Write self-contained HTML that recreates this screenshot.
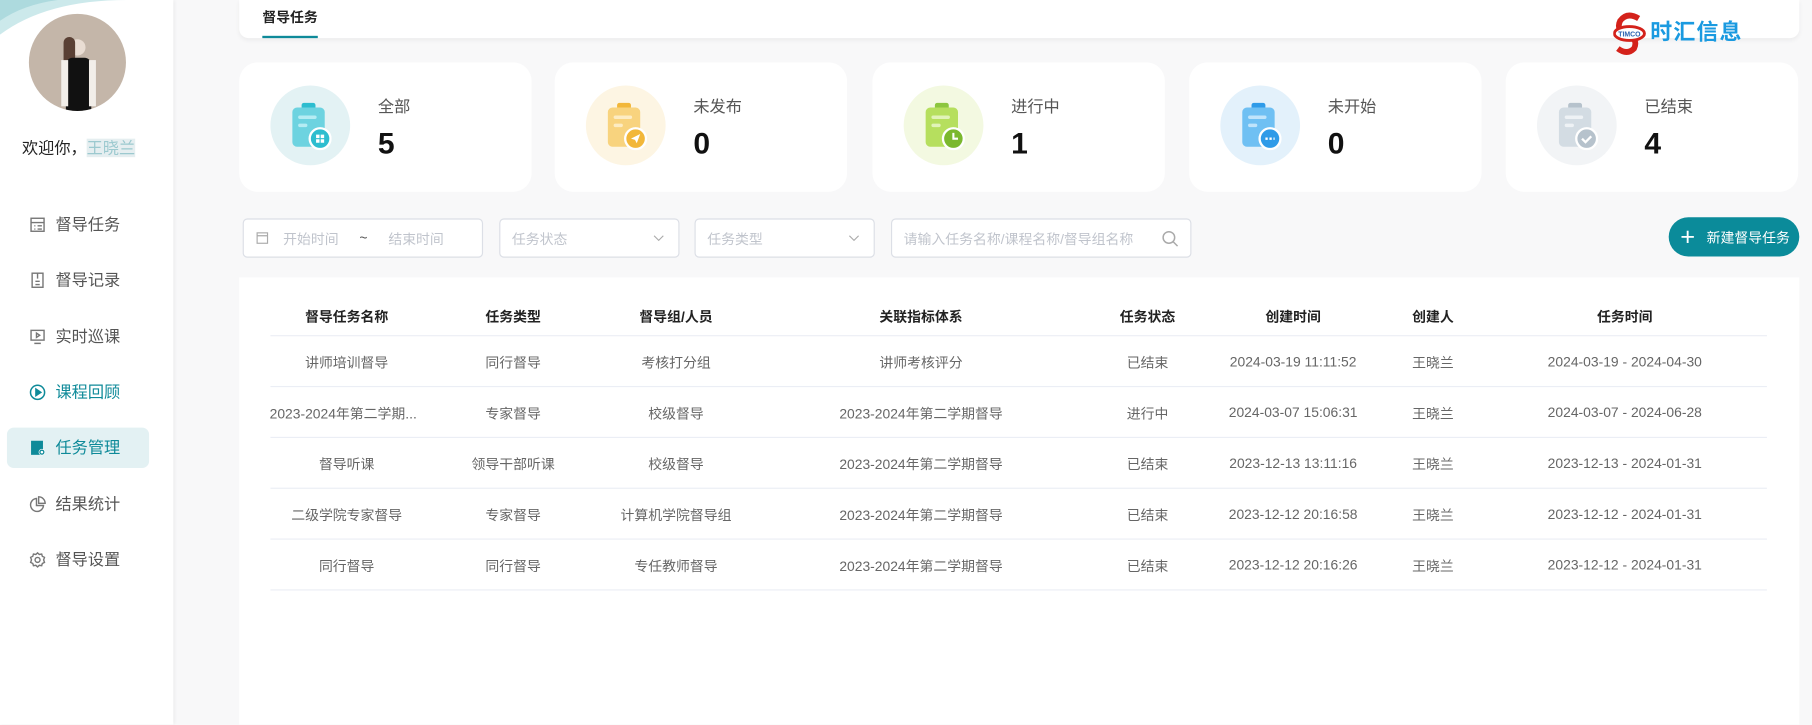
<!DOCTYPE html>
<html><head><meta charset="utf-8"><style>
*{margin:0;padding:0;box-sizing:border-box}
html,body{width:1812px;height:725px;overflow:hidden;background:#f8f8f9}
#w{position:absolute;left:0;top:0;width:1568px;height:627px;transform:scale(1.15561);transform-origin:0 0;font-family:"Liberation Sans","Noto Sans CJK SC",sans-serif;color:#333}
.a{position:absolute}
.side{left:0;top:0;width:150px;height:627px;background:#fff;box-shadow:1px 0 3px rgba(0,0,0,.06)}
.mi{position:absolute;left:25px;font-size:14px;color:#555;display:flex;align-items:center;height:20px}
.mi svg{width:15px;height:15px;margin-right:8px}
.card{background:#fff;border-radius:16px;top:54px;width:253px;height:112px}
.card .ic{position:absolute;left:27px;top:20px;width:69px;height:69px;border-radius:50%}
.card .ic svg{position:absolute;left:17px;top:14px}
.card .lb{position:absolute;left:120px;top:28px;font-size:14px;color:#555}
.card .nm{position:absolute;left:120px;top:55px;font-size:26px;font-weight:bold;color:#111}
.box{position:absolute;top:189px;height:34px;border:1px solid #dcdfe6;border-radius:4px;background:#fff;font-size:12px;color:#c0c4cc;display:flex;align-items:center;padding-left:10px}
.chev{position:absolute;right:12px;top:11px}
.th,.td{position:absolute;font-size:12px;transform:translateX(-50%);white-space:nowrap}
.th{font-weight:bold;color:#222;top:265px}
.td{color:#666}
.ln{position:absolute;left:234px;width:1295px;height:1px;background:#ebeef5}
</style></head><body><div id="w">
<div class="a side"></div>
<svg class="a" style="left:0;top:0" width="110" height="40"><path d="M0 30 Q40 0 110 0 L0 0Z" fill="#bfe3e6" opacity=".8"/><path d="M0 18 Q20 4 50 0 L0 0Z" fill="#9fd3d8" opacity=".7"/></svg>
<div class="a" style="left:25px;top:12px;width:84px;height:84px;border-radius:50%;background:#c4b6a9;overflow:hidden">
<div class="a" style="left:35px;top:22px;width:14px;height:14px;border-radius:50%;background:#e9ddd3"></div>
<div class="a" style="left:30px;top:20px;width:10px;height:40px;background:#5a4034;border-radius:5px"></div>
<div class="a" style="left:32px;top:38px;width:22px;height:50px;background:#111;border-radius:6px 6px 0 0"></div>
<div class="a" style="left:28px;top:40px;width:6px;height:40px;background:#f2eee9"></div>
<div class="a" style="left:52px;top:40px;width:6px;height:40px;background:#f2eee9"></div>
</div>
<div class="a" style="left:19px;top:118px;font-size:14px;color:#222">欢迎你，<span style="color:#9cc9cf;background:#e5eef0">王晓兰</span></div>
<div class="mi" style="top:184px"><svg viewBox="0 0 16 16" fill="none" stroke="#777" stroke-width="1.3"><rect x="2" y="2" width="12" height="12"/><path d="M2 6h12M5 9h1M8 9h4M5 12h1M8 12h4"/></svg>督导任务</div>
<div class="mi" style="top:232px"><svg viewBox="0 0 16 16" fill="none" stroke="#777" stroke-width="1.3"><rect x="3" y="1.5" width="10" height="13"/><path d="M8 1.5v5M6 9h4M6 12h4"/></svg>督导记录</div>
<div class="mi" style="top:281px"><svg viewBox="0 0 16 16" fill="none" stroke="#777" stroke-width="1.3"><rect x="2" y="2" width="12" height="9"/><path d="M7 4.5l3 2-3 2zM5 14h6"/></svg>实时巡课</div>
<div class="mi" style="top:329px;color:#0e8a99"><svg viewBox="0 0 16 16" fill="none" stroke="#0e8a99" stroke-width="1.4"><circle cx="8" cy="8" r="6.5"/><path d="M6.5 5v6l4.5-3z" fill="#0e8a99"/></svg>课程回顾</div>
<div class="a" style="left:6px;top:370px;width:123px;height:35px;background:#e3f1f3;border-radius:6px"></div>
<div class="mi" style="top:377px;color:#0e8a99"><svg viewBox="0 0 16 16"><rect x="2" y="1.5" width="11" height="13" fill="#0e8a99"/><circle cx="12" cy="12" r="3" fill="#fff"/><circle cx="12" cy="12" r="1.8" fill="none" stroke="#0e8a99" stroke-width="1.2"/></svg>任务管理</div>
<div class="mi" style="top:426px"><svg viewBox="0 0 16 16" fill="none" stroke="#777" stroke-width="1.3"><path d="M7 2.5A6 6 0 1 0 13.5 9H7z"/><path d="M9 1v6h6A6 6 0 0 0 9 1z"/></svg>结果统计</div>
<div class="mi" style="top:474px"><svg viewBox="0 0 16 16" fill="none" stroke="#777" stroke-width="1.3"><circle cx="8" cy="8" r="2.3"/><path d="M8 1.5l1.6 1.5 2.2-.4.6 2.1 2 1-.8 2.3.8 2.3-2 1-.6 2.1-2.2-.4L8 14.5 6.4 13l-2.2.4-.6-2.1-2-1 .8-2.3-.8-2.3 2-1 .6-2.1 2.2.4z"/></svg>督导设置</div>

<div class="a" style="left:207px;top:0;width:1350px;height:33px;background:#fff;border-radius:0 0 8px 8px;box-shadow:0 2px 4px rgba(0,0,0,.05)"></div>
<div class="a" style="left:227px;top:6px;font-size:12px;font-weight:bold;color:#222">督导任务</div>
<div class="a" style="left:227px;top:31px;width:48px;height:2px;background:#0e8a99"></div>
<svg class="a" style="left:1396px;top:10px" width="30" height="40"><path d="M22 6 Q12 0 6 8 Q2 16 12 20 Q22 24 18 32 Q12 38 4 32" fill="none" stroke="#d4221b" stroke-width="5"/><ellipse cx="14" cy="19" rx="13" ry="6" fill="#fff" stroke="#d4221b" stroke-width="2.5"/><text x="14" y="21.5" font-size="6" font-weight="bold" text-anchor="middle" fill="#2a62b0" font-family="Liberation Sans">TIMCO</text></svg>
<div class="a" style="left:1428px;top:13px;font-size:19px;font-weight:bold;color:#1a9ae0;letter-spacing:1px">时汇信息</div>

<div class="a card" style="left:207px"><div class="ic" style="background:#e3f2f4"><svg width="36" height="42"><rect x="10" y="1" width="12" height="6" rx="2" fill="#2dbdcf"/><rect x="2" y="5" width="28" height="34" rx="4" fill="#6dd3e0"/><rect x="7" y="12" width="16" height="3" rx="1.5" fill="#b5ecf3"/><rect x="7" y="19" width="8" height="3" rx="1.5" fill="#b5ecf3"/><circle cx="26" cy="32" r="9" fill="#2dbdcf" stroke="#fff" stroke-width="2"/><path d="M22.5 28.5h3v3h-3zM26.5 28.5h3v3h-3zM22.5 32.5h3v3h-3zM26.5 32.5h3v3h-3z" fill="#fff"/></svg></div><div class="lb">全部</div><div class="nm">5</div></div>
<div class="a card" style="left:480px"><div class="ic" style="background:#fdf5e3"><svg width="36" height="42"><rect x="10" y="1" width="12" height="6" rx="2" fill="#f2b73a"/><rect x="2" y="5" width="28" height="34" rx="4" fill="#f8d37e"/><rect x="7" y="12" width="16" height="3" rx="1.5" fill="#fdecc3"/><rect x="7" y="19" width="8" height="3" rx="1.5" fill="#fdecc3"/><circle cx="26" cy="32" r="9" fill="#f2b73a" stroke="#fff" stroke-width="2"/><path d="M22 32l8-4-3 8-1.5-3z" fill="#fff"/></svg></div><div class="lb">未发布</div><div class="nm">0</div></div>
<div class="a card" style="left:755px"><div class="ic" style="background:#f3f9e1"><svg width="36" height="42"><rect x="10" y="1" width="12" height="6" rx="2" fill="#8cc63f"/><rect x="2" y="5" width="28" height="34" rx="4" fill="#b6df5e"/><rect x="7" y="12" width="16" height="3" rx="1.5" fill="#e1f3b8"/><rect x="7" y="19" width="8" height="3" rx="1.5" fill="#e1f3b8"/><circle cx="26" cy="32" r="9" fill="#7bb82e" stroke="#fff" stroke-width="2"/><path d="M26 27v5h4" stroke="#fff" stroke-width="1.8" fill="none"/></svg></div><div class="lb">进行中</div><div class="nm">1</div></div>
<div class="a card" style="left:1029px"><div class="ic" style="background:#e3f1fb"><svg width="36" height="42"><rect x="10" y="1" width="12" height="6" rx="2" fill="#2f9be8"/><rect x="2" y="5" width="28" height="34" rx="4" fill="#6fc0f3"/><rect x="7" y="12" width="16" height="3" rx="1.5" fill="#c0e4fb"/><rect x="7" y="19" width="8" height="3" rx="1.5" fill="#c0e4fb"/><circle cx="26" cy="32" r="9" fill="#2f9be8" stroke="#fff" stroke-width="2"/><path d="M22 32h8" stroke="#fff" stroke-width="2" stroke-dasharray="2 1.5"/></svg></div><div class="lb">未开始</div><div class="nm">0</div></div>
<div class="a card" style="left:1303px"><div class="ic" style="background:#f2f4f6"><svg width="36" height="42"><rect x="10" y="1" width="12" height="6" rx="2" fill="#b6c2cc"/><rect x="2" y="5" width="28" height="34" rx="4" fill="#d3dce3"/><rect x="7" y="12" width="16" height="3" rx="1.5" fill="#eef2f5"/><rect x="7" y="19" width="8" height="3" rx="1.5" fill="#eef2f5"/><circle cx="26" cy="32" r="9" fill="#b6c2cc" stroke="#fff" stroke-width="2"/><path d="M22 32l3 3 5-5" stroke="#fff" stroke-width="2" fill="none"/></svg></div><div class="lb">已结束</div><div class="nm">4</div></div>

<div class="box" style="left:210px;width:208px"><svg width="12" height="12" viewBox="0 0 12 12" fill="none" stroke="#aaa"><rect x="1.5" y="1.5" width="9" height="9"/><path d="M1.5 4h9"/></svg><span style="margin-left:12px">开始时间</span><span style="margin-left:18px;color:#555">~</span><span style="margin-left:18px">结束时间</span></div>
<div class="box" style="left:432px;width:156px">任务状态<svg class="chev" width="10" height="10" viewBox="0 0 10 10" fill="none" stroke="#aaa"><path d="M1 3l4 4 4-4"/></svg></div>
<div class="box" style="left:601px;width:156px">任务类型<svg class="chev" width="10" height="10" viewBox="0 0 10 10" fill="none" stroke="#aaa"><path d="M1 3l4 4 4-4"/></svg></div>
<div class="box" style="left:771px;width:260px">请输入任务名称/课程名称/督导组名称<svg style="position:absolute;right:10px;top:9px" width="15" height="15" viewBox="0 0 15 15" fill="none" stroke="#aaa" stroke-width="1.3"><circle cx="6.5" cy="6.5" r="5"/><path d="M10 10l4 4"/></svg></div>
<div class="a" style="left:1444px;top:188px;width:113px;height:34px;border-radius:17px;background:#0b8b9a;color:#fff;font-size:12px;display:flex;align-items:center"><span style="font-size:22px;margin-left:10px;margin-right:10px;font-weight:300;line-height:1">+</span>新建督导任务</div>

<div class="a" style="left:207px;top:240px;width:1350px;height:387px;background:#fff"></div>
<div class="th" style="left:300px">督导任务名称</div><div class="th" style="left:444px">任务类型</div><div class="th" style="left:585px">督导组/人员</div><div class="th" style="left:797px">关联指标体系</div><div class="th" style="left:993px">任务状态</div><div class="th" style="left:1119px">创建时间</div><div class="th" style="left:1240px">创建人</div><div class="th" style="left:1406px">任务时间</div>
<div class="ln" style="top:290px"></div><div class="ln" style="top:334px"></div><div class="ln" style="top:378px"></div><div class="ln" style="top:422px"></div><div class="ln" style="top:466px"></div><div class="ln" style="top:510px"></div>

<div class="td" style="left:300px;top:305px">讲师培训督导</div><div class="td" style="left:444px;top:305px">同行督导</div><div class="td" style="left:585px;top:305px">考核打分组</div><div class="td" style="left:797px;top:305px">讲师考核评分</div><div class="td" style="left:993px;top:305px">已结束</div><div class="td" style="left:1119px;top:306px">2024-03-19 11:11:52</div><div class="td" style="left:1240px;top:305px">王晓兰</div><div class="td" style="left:1406px;top:306px">2024-03-19 - 2024-04-30</div>

<div class="td" style="left:297px;top:349px">2023-2024年第二学期...</div><div class="td" style="left:444px;top:349px">专家督导</div><div class="td" style="left:585px;top:349px">校级督导</div><div class="td" style="left:797px;top:349px">2023-2024年第二学期督导</div><div class="td" style="left:993px;top:349px">进行中</div><div class="td" style="left:1119px;top:350px">2024-03-07 15:06:31</div><div class="td" style="left:1240px;top:349px">王晓兰</div><div class="td" style="left:1406px;top:350px">2024-03-07 - 2024-06-28</div>

<div class="td" style="left:300px;top:393px">督导听课</div><div class="td" style="left:444px;top:393px">领导干部听课</div><div class="td" style="left:585px;top:393px">校级督导</div><div class="td" style="left:797px;top:393px">2023-2024年第二学期督导</div><div class="td" style="left:993px;top:393px">已结束</div><div class="td" style="left:1119px;top:394px">2023-12-13 13:11:16</div><div class="td" style="left:1240px;top:393px">王晓兰</div><div class="td" style="left:1406px;top:394px">2023-12-13 - 2024-01-31</div>

<div class="td" style="left:300px;top:437px">二级学院专家督导</div><div class="td" style="left:444px;top:437px">专家督导</div><div class="td" style="left:585px;top:437px">计算机学院督导组</div><div class="td" style="left:797px;top:437px">2023-2024年第二学期督导</div><div class="td" style="left:993px;top:437px">已结束</div><div class="td" style="left:1119px;top:438px">2023-12-12 20:16:58</div><div class="td" style="left:1240px;top:437px">王晓兰</div><div class="td" style="left:1406px;top:438px">2023-12-12 - 2024-01-31</div>

<div class="td" style="left:300px;top:481px">同行督导</div><div class="td" style="left:444px;top:481px">同行督导</div><div class="td" style="left:585px;top:481px">专任教师督导</div><div class="td" style="left:797px;top:481px">2023-2024年第二学期督导</div><div class="td" style="left:993px;top:481px">已结束</div><div class="td" style="left:1119px;top:482px">2023-12-12 20:16:26</div><div class="td" style="left:1240px;top:481px">王晓兰</div><div class="td" style="left:1406px;top:482px">2023-12-12 - 2024-01-31</div>
</div></body></html>
